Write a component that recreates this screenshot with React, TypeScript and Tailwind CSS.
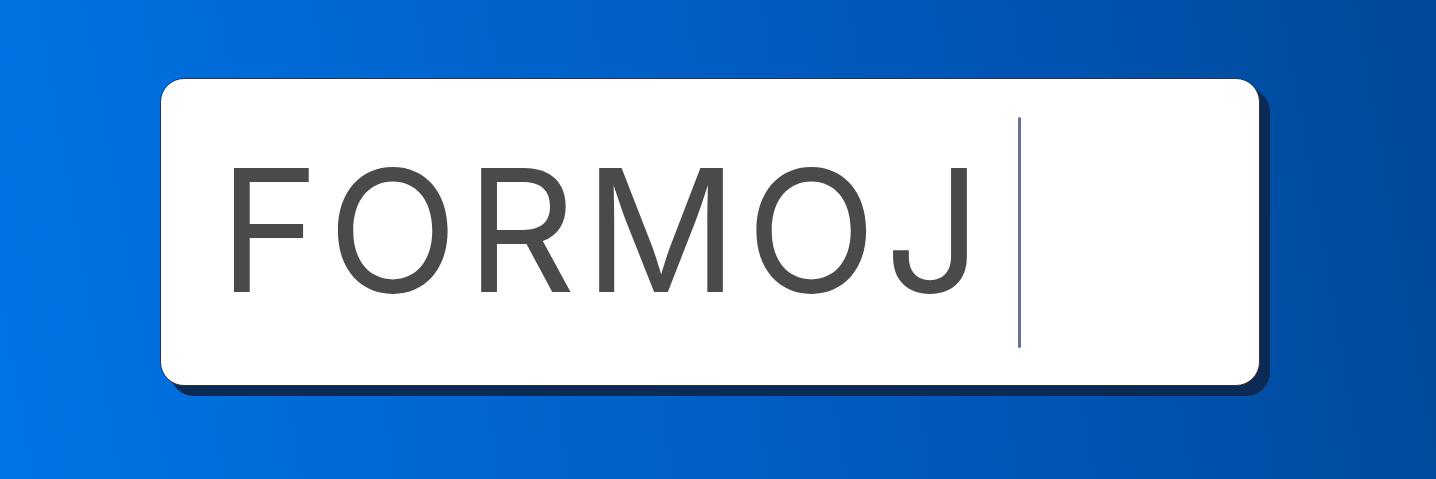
export default function App() {
  return (
    <div className="h-[479px] w-full bg-[linear-gradient(80deg,#0074e6_0%,#005ec4_50%,#00489a_100%)] flex items-start pt-[78px] pl-[160px]">
      <div className="w-[1100px] h-[308px] bg-white rounded-[24px] border border-[#2a3140] shadow-[10px_10px_0_0_#0b2a56] flex items-center pl-[58px]">
        <span className="mb-[5px] font-['Inter',sans-serif] text-[170px] leading-none tracking-[0.05em] text-[#4a4a4a]">
          FORMOJ
        </span>
        <div className="ml-[28px] w-[3px] h-[231px] rounded-full bg-[#6b7290]" />
      </div>
    </div>
  );
}
